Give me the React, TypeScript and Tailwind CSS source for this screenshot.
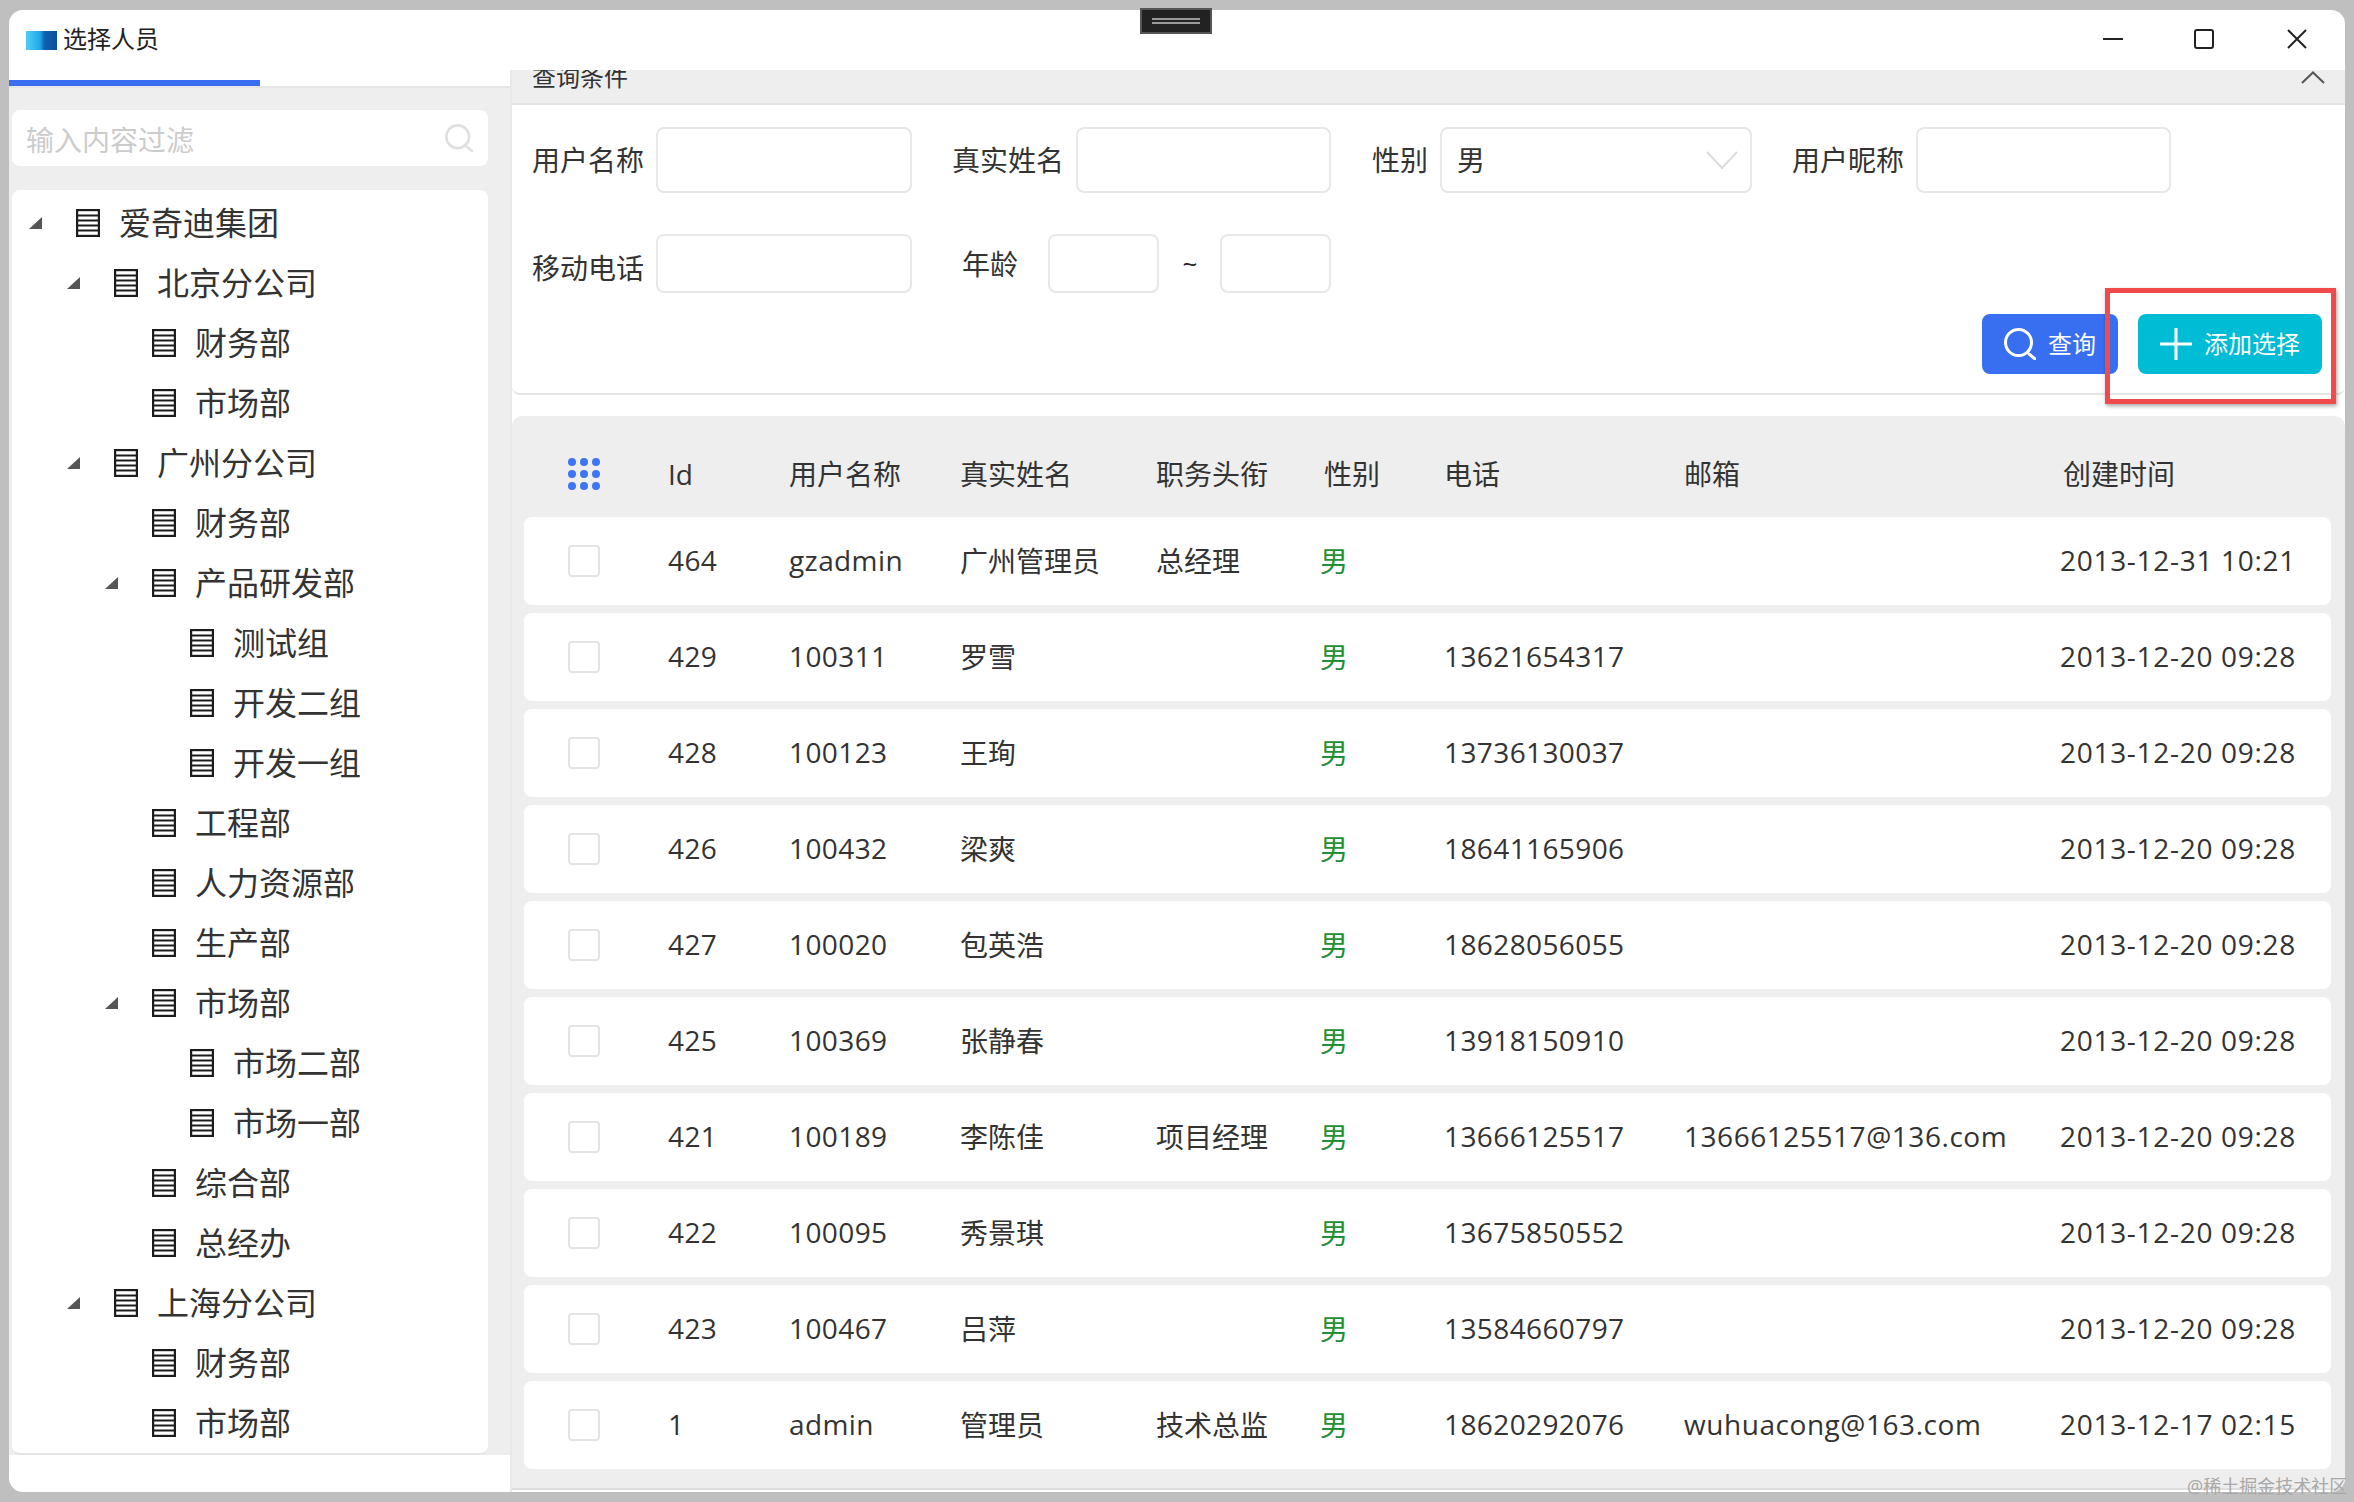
import React from "react";

const tree: [number, string, boolean][] = [
  [0, "爱奇迪集团", true],
  [1, "北京分公司", true],
  [2, "财务部", false],
  [2, "市场部", false],
  [1, "广州分公司", true],
  [2, "财务部", false],
  [2, "产品研发部", true],
  [3, "测试组", false],
  [3, "开发二组", false],
  [3, "开发一组", false],
  [2, "工程部", false],
  [2, "人力资源部", false],
  [2, "生产部", false],
  [2, "市场部", true],
  [3, "市场二部", false],
  [3, "市场一部", false],
  [2, "综合部", false],
  [2, "总经办", false],
  [1, "上海分公司", true],
  [2, "财务部", false],
  [2, "市场部", false],
];

const rows = [
  ["464", "gzadmin", "广州管理员", "总经理", "", "", "2013-12-31 10:21"],
  ["429", "100311", "罗雪", "", "13621654317", "", "2013-12-20 09:28"],
  ["428", "100123", "王珣", "", "13736130037", "", "2013-12-20 09:28"],
  ["426", "100432", "梁爽", "", "18641165906", "", "2013-12-20 09:28"],
  ["427", "100020", "包英浩", "", "18628056055", "", "2013-12-20 09:28"],
  ["425", "100369", "张静春", "", "13918150910", "", "2013-12-20 09:28"],
  ["421", "100189", "李陈佳", "项目经理", "13666125517", "13666125517@136.com", "2013-12-20 09:28"],
  ["422", "100095", "秀景琪", "", "13675850552", "", "2013-12-20 09:28"],
  ["423", "100467", "吕萍", "", "13584660797", "", "2013-12-20 09:28"],
  ["1", "admin", "管理员", "技术总监", "18620292076", "wuhuacong@163.com", "2013-12-17 02:15"],
];

const gridCols = "grid grid-cols-[144px_121px_171px_196px_164px_124px_240px_376px_270px] items-center";

function ListIcon() {
  return (
    <svg width="24" height="28" viewBox="0 0 24 28" className="shrink-0">
      <rect x="1" y="1" width="22" height="26" fill="none" stroke="#1c1c1c" strokeWidth="2.4" />
      <path d="M1 6.5H23M1 11.5H23M1 16.5H23M1 21.5H23" stroke="#1c1c1c" strokeWidth="2.2" />
    </svg>
  );
}

function Tri() {
  return (
    <svg width="13" height="12" viewBox="0 0 13 12" className="shrink-0">
      <polygon points="13,0 13,12 0,12" fill="#555" />
    </svg>
  );
}

function Search({ color, size }: { color: string; size: number }) {
  return (
    <svg width={size} height={size} viewBox="0 0 32 32" fill="none" className="shrink-0">
      <circle cx="14.5" cy="14.5" r="13" stroke={color} strokeWidth="3" />
      <path d="M25 26L31 31" stroke={color} strokeWidth="3" strokeLinecap="round" />
    </svg>
  );
}

function Box({ w, ml, children }: { w: string; ml: string; children?: React.ReactNode }) {
  return <div className={`${w} ${ml} h-full rounded-[8px] border-2 border-[#e8e8e8] bg-white`}>{children}</div>;
}

function Dots() {
  const pts = [4, 16, 28];
  return (
    <svg width="32" height="32" viewBox="0 0 32 32">
      {pts.map((y) => pts.map((x) => <circle key={`${x}-${y}`} cx={x} cy={y} r="4" fill="#3e76f2" />))}
    </svg>
  );
}

export default function App() {
  return (
    <div className="relative w-[2354px] h-[1502px] overflow-hidden bg-[#bfbfbf] pl-[9px] pr-[9px] pt-[10px] pb-[10px] font-['Open_Sans','Noto_Sans_CJK_SC',sans-serif] text-[#333]">
      <div className="flex h-full flex-col overflow-hidden rounded-[14px] bg-white">
        {/* title bar */}
        <div className="flex h-[60px] shrink-0 items-center">
          <div className="ml-[17px] h-[19px] w-[31px] bg-[linear-gradient(90deg,#4fd0f5_0%,#22a8e8_45%,#0f5fb0_60%,#0c4f9c_100%)]" />
          <span className="ml-[6px] pb-[2px] text-[24px] leading-[32px] text-[#222]">选择人员</span>
          <div className="ml-auto flex items-center pb-[3px] pr-[38px]">
            <svg width="20" height="20" viewBox="0 0 20 20" className="mr-[71px]"><path d="M0 10H20" stroke="#222" strokeWidth="2" /></svg>
            <svg width="20" height="20" viewBox="0 0 20 20" className="mr-[73px]"><rect x="1" y="1" width="18" height="18" rx="2" fill="none" stroke="#222" strokeWidth="2" /></svg>
            <svg width="20" height="20" viewBox="0 0 20 20"><path d="M1 1L19 19M19 1L1 19" stroke="#222" strokeWidth="2" /></svg>
          </div>
        </div>

        <div className="flex min-h-0 flex-1">
          {/* left column */}
          <div className="flex w-[501px] shrink-0 flex-col">
            <div className="h-[18px] shrink-0 border-b-2 border-[#e5e5e5] pt-[10px]">
              <div className="h-[6px] w-[251px] bg-[#3a6df0]" />
            </div>
            <div className="flex h-[1367px] flex-col bg-[#eeeeee] pl-[3px] pr-[22px] pt-[22px]">
              <div className="flex h-[56px] shrink-0 items-center rounded-[8px] bg-white pl-[14px] pr-[15px]">
                <span className="pt-[3px] text-[28px] leading-[36px] text-[#cccccc]">输入内容过滤</span>
                <span className="ml-auto"><Search color="#e0e0e0" size={28} /></span>
              </div>
              <div className="mt-[24px] flex-1 rounded-[8px] border-b-2 border-[#e5e5e5] bg-white pt-[3px]">
                {tree.map(([lvl, name, open], i) => (
                  <div
                    key={i}
                    className={`flex h-[60px] items-center ${lvl === 0 ? "pl-[17px]" : lvl === 1 ? "pl-[55px]" : lvl === 2 ? "pl-[93px]" : "pl-[131px]"}`}
                  >
                    <span className="flex w-[47px] shrink-0 items-center">{open ? <Tri /> : null}</span>
                    <ListIcon />
                    <span className="ml-[19px] text-[32px] leading-[40px] text-[#333]">{name}</span>
                  </div>
                ))}
              </div>
            </div>
          </div>

          {/* right column */}
          <div className="flex min-w-0 flex-1 flex-col border-l-2 border-[#e8e8e8]">
            <div className="flex h-[35px] shrink-0 justify-between overflow-hidden border-b-2 border-[#e5e5e5] bg-[#eeeeee] pl-[20px] pr-[20px]">
              <span className="text-[24px] leading-[14px] text-[#333]">查询条件</span>
              <svg width="24" height="13" viewBox="0 0 24 13" fill="none" className="mt-[1px]"><path d="M1 12L12 1.5L23 12" stroke="#555" strokeWidth="2" /></svg>
            </div>

            <div className="h-[290px] shrink-0 rounded-b-[8px] border-b-2 border-[#e5e5e5] bg-white pl-[20px] pr-[23px] pt-[22px]">
              <div className="flex h-[66px] items-center text-[28px] text-[#333]">
                <span className="w-[112px] shrink-0">用户名称</span>
                <Box w="w-[256px]" ml="ml-[12px]" />
                <span className="ml-[40px] w-[112px] shrink-0">真实姓名</span>
                <Box w="w-[255px]" ml="ml-[12px]" />
                <span className="ml-[41px] w-[56px] shrink-0">性别</span>
                <Box w="w-[312px]" ml="ml-[12px]">
                  <div className="flex h-full items-center pl-[15px] pr-[12px]">
                    <span>男</span>
                    <svg width="32" height="18" viewBox="0 0 32 18" fill="none" className="ml-auto"><path d="M1 1L16 17L31 1" stroke="#dcdcdc" strokeWidth="2" /></svg>
                  </div>
                </Box>
                <span className="ml-[40px] w-[112px] shrink-0">用户昵称</span>
                <Box w="w-[255px]" ml="ml-[12px]" />
              </div>
              <div className="mt-[41px] flex h-[59px] items-center text-[28px] text-[#333]">
                <span className="w-[112px] shrink-0 pt-[8px]">移动电话</span>
                <Box w="w-[256px]" ml="ml-[12px]" />
                <span className="ml-[50px] w-[56px] shrink-0">年龄</span>
                <Box w="w-[111px]" ml="ml-[30px]" />
                <span className="ml-[23px] w-[16px] shrink-0 text-center text-[26px] text-[#222]">~</span>
                <Box w="w-[111px]" ml="ml-[22px]" />
              </div>
              <div className="mt-[21px] flex h-[60px] justify-end gap-[20px]">
                <div className="flex w-[136px] items-center rounded-[8px] bg-[#386ef0] pl-[22px] text-[24px] text-white">
                  <Search color="#ffffff" size={32} />
                  <span className="ml-[12px]">查询</span>
                </div>
                <div className="flex w-[184px] items-center rounded-[8px] bg-[#00bcd4] pl-[22px] text-[24px] text-white">
                  <svg width="32" height="32" viewBox="0 0 32 32"><path d="M16 0V32M0 16H32" stroke="#fff" strokeWidth="3" /></svg>
                  <span className="ml-[12px]">添加选择</span>
                </div>
              </div>
            </div>

            <div className="mt-[21px] h-[1074px] shrink-0 rounded-tl-[10px] rounded-tr-[10px] border-b-2 border-[#dddddd] bg-[#eeeeee] pl-[12px] pr-[14px] pt-[14px]">
              <div className={`${gridCols} h-[87px] text-[28px] text-[#333]`}>
                <div className="pl-[44px]"><Dots /></div>
                <div>Id</div>
                <div>用户名称</div>
                <div>真实姓名</div>
                <div>职务头衔</div>
                <div className="pl-[4px]">性别</div>
                <div>电话</div>
                <div>邮箱</div>
                <div className="pl-[3px]">创建时间</div>
              </div>
              <div className="flex flex-col gap-[8px]">
                {rows.map((r) => (
                  <div key={r[0]} className={`${gridCols} h-[88px] rounded-[8px] bg-white text-[28px] text-[#333]`}>
                    <div className="pl-[44px]">
                      <div className="h-[32px] w-[32px] rounded-[4px] border-2 border-[#e4e4e4] bg-white" />
                    </div>
                    <div className="pb-[3px] tracking-[0.4px]">{r[0]}</div>
                    <div className="pb-[3px] tracking-[0.4px]">{r[1]}</div>
                    <div>{r[2]}</div>
                    <div>{r[3]}</div>
                    <div className="text-[#239035]">男</div>
                    <div className="pb-[3px] tracking-[0.4px]">{r[4]}</div>
                    <div className="pb-[3px] tracking-[0.55px]">{r[5]}</div>
                    <div className="pb-[3px] tracking-[0.7px]">{r[6]}</div>
                  </div>
                ))}
              </div>
            </div>
          </div>
        </div>
      </div>

      {/* top drag handle overlay */}
      <div className="absolute left-[1140px] top-[8px] flex h-[26px] w-[72px] flex-col items-center justify-center gap-[2px] border-2 border-[#555] bg-[#222]">
        <div className="h-[2px] w-[48px] bg-[#999]" />
        <div className="h-[2px] w-[48px] bg-[#999]" />
      </div>

      {/* red annotation box */}
      <div className="absolute left-[2105px] top-[288px] h-[116px] w-[231px] border-[5px] border-[#f04a4a] shadow-[1px_2px_4px_rgba(0,0,0,0.35)]" />

      {/* watermark */}
      <div className="absolute left-[2187px] top-[1474px] whitespace-nowrap text-[18px] leading-[24px] text-[#a8a8a8]">@稀土掘金技术社区</div>
    </div>
  );
}
